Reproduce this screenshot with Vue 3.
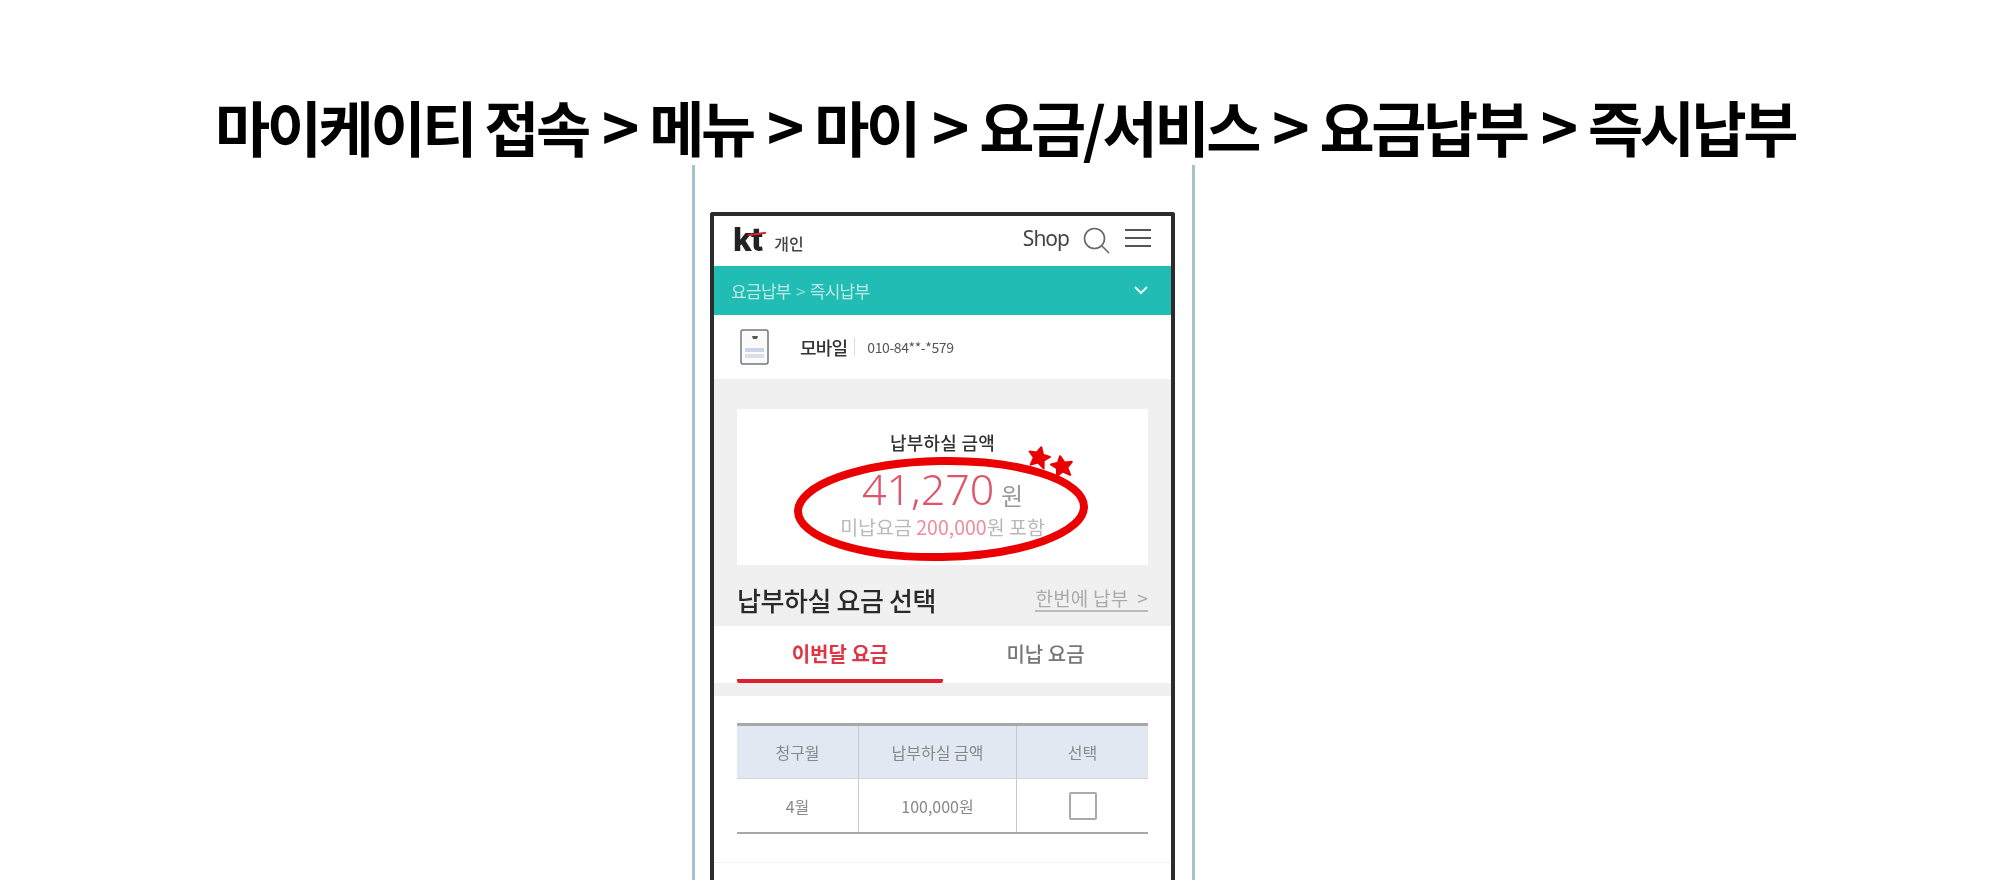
<script setup>
const columns = ["청구월", "납부하실 금액", "선택"];
</script>

<template>
  <div class="page">
    <h1 class="title">마이케이티 접속<span class="sep">&gt;</span>메뉴<span class="sep">&gt;</span>마이<span class="sep">&gt;</span>요금/서비스<span class="sep">&gt;</span>요금납부<span class="sep">&gt;</span>즉시납부</h1>

    <div class="phone">
      <div class="screen">
        <header class="top">
          <div class="brand">
            <span class="logo">kt<i class="logo-slash"></i></span>
            <span class="brand-sub">개인</span>
          </div>
          <div class="top-right">
            <span class="shop">Shop</span>
            <svg class="search" width="28" height="28" viewBox="0 0 28 28" fill="none" stroke="#666" stroke-width="1.6">
              <circle cx="12.5" cy="12.5" r="10" />
              <path d="M20 20l7 7" />
            </svg>
            <svg width="26" height="20" viewBox="0 0 26 20" fill="none" stroke="#555" stroke-width="2">
              <path d="M0 2h26M0 10h26M0 18h26" />
            </svg>
          </div>
        </header>

        <div class="crumb">
          <span>요금납부 <em>&gt;</em> 즉시납부</span>
          <svg width="14" height="9" viewBox="0 0 14 9" fill="none" stroke="#e6f7f5" stroke-width="2">
            <path d="M1 1l6 6 6-6" />
          </svg>
        </div>

        <div class="line-row">
          <svg class="bill" width="29" height="36" viewBox="0 0 29 36">
            <rect x="1" y="1" width="27" height="34" rx="2" fill="#fbfbfb" stroke="#777" stroke-width="1.5" />
            <path d="M12 7h6l-1 3h-4z" fill="#555" />
            <rect x="5" y="19" width="19" height="4" fill="#ccd5e6" />
            <rect x="5" y="25" width="19" height="4" fill="#d9dfeb" />
          </svg>
          <span class="line-name">모바일</span>
          <span class="line-num">010-84**-*579</span>
        </div>

        <section class="gray">
          <div class="due-card">
            <p class="due-label">납부하실 금액</p>
            <p class="due-amount"><b>41,270</b> <span>원</span></p>
            <p class="due-note">미납요금 <span>200,000</span>원 포함</p>
          </div>
          <div class="select-head">
            <h2>납부하실 요금 선택</h2>
            <a class="all-link">한번에 납부 &nbsp;&gt;</a>
          </div>
        </section>

        <nav class="tabs">
          <span class="tab active">이번달 요금</span>
          <span class="tab">미납 요금</span>
        </nav>
        <div class="band"></div>

        <div class="table-wrap">
          <div class="grid head">
            <div v-for="col in columns" :key="col" class="cell">{{ col }}</div>
          </div>
          <div class="grid body">
            <div class="cell">4월</div>
            <div class="cell">100,000원</div>
            <div class="cell"><i class="check"></i></div>
          </div>
        </div>
        <div class="after"></div>
      </div>
    </div>

    <svg class="mark" width="320" height="150" viewBox="0 0 320 150" fill="#ea0000">
      <ellipse cx="155" cy="78" rx="143" ry="48" fill="none" stroke="#ea0000" stroke-width="8" transform="rotate(-1 155 78)" />
      <path transform="translate(253 27) rotate(12)" d="M0-11l3.2 7 7.3.6-5.4 5 1.6 7.6L0 4.6-6.7 8.2l1.6-7.6-5.4-5 7.3-.6z" stroke="#ea0000" stroke-width="2" stroke-linejoin="round" />
      <path transform="translate(276 36) rotate(-10)" d="M0-11l3.2 7 7.3.6-5.4 5 1.6 7.6L0 4.6-6.7 8.2l1.6-7.6-5.4-5 7.3-.6z" stroke="#ea0000" stroke-width="2" stroke-linejoin="round" />
    </svg>
  </div>
</template>

<style scoped>
.page {
  position: relative;
  width: 2000px;
  height: 880px;
  overflow: hidden;
  background: #fff;
  font-family: "Noto Sans CJK KR", "Noto Sans", sans-serif;
  color: #222;
}

.title {
  margin: 0;
  padding: 84px 0 0 215px;
  height: 81px;
  font-size: 60px;
  line-height: 81px;
  font-weight: 700;
  letter-spacing: -3.4px;
  color: #000;
  white-space: nowrap;
}

.sep {
  font-size: 64px;
  margin: 0 13px 0 14px;
}

.phone {
  box-sizing: border-box;
  width: 503px;
  height: 800px;
  margin-left: 692px;
  padding: 47px 0 0 15px;
  border-left: 3px solid #a6c2cd;
  border-right: 3px solid #a6c2cd;
  filter: blur(0.7px);
}

.screen {
  box-sizing: border-box;
  width: 465px;
  height: 760px;
  border: 4px solid #2c2c2c;
  border-bottom: 0;
  border-radius: 3px 3px 0 0;
}

.top {
  height: 50px;
  display: flex;
  align-items: center;
  justify-content: space-between;
  padding: 0 20px 0 19px;
}

.brand {
  display: flex;
  align-items: center;
  gap: 12px;
  margin-top: -3px;
}

.logo {
  position: relative;
  font-family: "Inter", sans-serif;
  font-size: 32px;
  line-height: 32px;
  font-weight: 800;
  letter-spacing: -1px;
  color: #222;
}

.logo-slash {
  position: absolute;
  left: 15px;
  top: 9px;
  width: 18px;
  height: 2px;
  background: #e01f2d;
  transform: rotate(-8deg);
}

.brand-sub {
  margin-top: 6px;
  font-size: 16px;
  font-weight: 500;
  color: #444;
}

.top-right {
  display: flex;
  align-items: center;
  gap: 15px;
  margin-top: -7px;
}

.shop {
  margin-right: -2px;
  font-family: "Noto Sans", sans-serif;
  font-size: 21px;
  letter-spacing: -1px;
  color: #444;
}

.search {
  margin-top: 4px;
}

.crumb {
  height: 49px;
  display: flex;
  align-items: center;
  justify-content: space-between;
  padding: 0 23px 0 17px;
  background: #21bcb4;
  color: #bdeae5;
  font-size: 17px;
  letter-spacing: -0.7px;
}

.crumb em {
  font-style: normal;
  opacity: 0.7;
  margin: 0 2px;
}

.line-row {
  height: 64px;
  display: flex;
  align-items: center;
  padding-left: 26px;
  background: #fff;
}

.bill {
  margin-right: 31px;
}

.line-name {
  font-size: 18px;
  font-weight: 500;
  letter-spacing: -0.8px;
  color: #333;
  padding-right: 7px;
  border-right: 1px solid #ddd;
  line-height: 18px;
}

.line-num {
  margin-left: 12px;
  font-size: 14px;
  letter-spacing: -0.4px;
  color: #555;
}

.gray {
  box-sizing: border-box;
  height: 247px;
  padding: 30px 23px 0;
  background: #f0f0f0;
}

.due-card {
  box-sizing: border-box;
  height: 156px;
  padding-top: 20px;
  background: #fff;
  text-align: center;
}

.due-card p {
  margin: 0;
}

.due-label {
  font-size: 18px;
  line-height: 26px;
  font-weight: 500;
  letter-spacing: 0.2px;
  color: #333;
}

.due-amount {
  height: 46px;
  line-height: 46px;
  margin-top: 11px !important;
  margin-bottom: 2px !important;
}

.due-amount b {
  display: inline-block;
  line-height: 46px;
  font-family: "Noto Sans", sans-serif;
  font-size: 43px;
  font-weight: 300;
  color: #df5468;
}

.due-amount span {
  display: inline-block;
  line-height: 46px;
  margin-left: 3px;
  font-size: 24px;
  color: #999;
}

.due-note {
  font-size: 19.5px;
  line-height: 26px;
  color: #b9b9b9;
}

.due-note span {
  color: #ee8b9c;
}

.select-head {
  box-sizing: border-box;
  display: flex;
  justify-content: space-between;
  align-items: center;
  height: 61px;
  padding-top: 7px;
}

.select-head h2 {
  margin: 0;
  font-size: 26px;
  font-weight: 500;
  letter-spacing: -0.4px;
  color: #2a2a2a;
}

.all-link {
  font-size: 19px;
  letter-spacing: 0.2px;
  color: #aaa;
  padding-bottom: 1px;
  border-bottom: 2px solid #bbb;
  line-height: 22px;
}

.tabs {
  box-sizing: border-box;
  height: 57px;
  display: grid;
  grid-template-columns: 206px 205px;
  padding: 0 23px;
  background: #fff;
}

.tab {
  box-sizing: border-box;
  text-align: center;
  padding-top: 15px;
  font-size: 20px;
  line-height: 26px;
  font-weight: 500;
  color: #777;
}

.tab.active {
  font-weight: 700;
  color: #e03545;
  height: 57px;
  border-bottom: 4px solid #e0202f;
  border-radius: 0 0 2px 2px;
}

.band {
  height: 13px;
  background: #f0f0f0;
}

.table-wrap {
  margin: 27px 23px 0;
}

.grid {
  box-sizing: border-box;
  display: grid;
  grid-template-columns: 122px 158px 131px;
  text-align: center;
  font-size: 16px;
  color: #888;
}

.cell {
  display: flex;
  align-items: center;
  justify-content: center;
  border-right: 1px solid #c8c8c8;
}

.cell:last-child {
  border-right: 0;
}

.head {
  height: 55px;
  background: #e1e8f1;
  border-top: 3px solid #a8a8a8;
}

.body {
  height: 56px;
  border-bottom: 2px solid #a8a8a8;
  border-top: 1px solid #d5d5d5;
}

.check {
  display: block;
  width: 24px;
  height: 24px;
  border: 2px solid #aaa;
  border-radius: 2px;
}

.after {
  margin-top: 28px;
  border-top: 1px solid #f2f2f2;
}

.mark {
  position: absolute;
  left: 786px;
  top: 431px;
}
</style>
